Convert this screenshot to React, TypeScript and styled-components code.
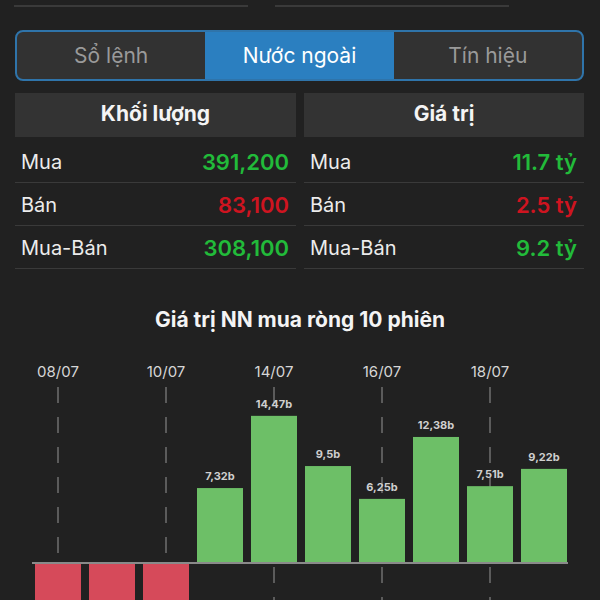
import React, { useState } from "react";
import styled, { createGlobalStyle } from "styled-components";

const GlobalStyle = createGlobalStyle`
  html, body {
    margin: 0;
    padding: 0;
    background: #212121;
  }
  body {
    font-family: Inter, "Noto Sans", "Liberation Sans", sans-serif;
    color: #f2f2f2;
  }
`;

type Tone = "up" | "down";

type Stat = {
  label: string;
  value: string;
  tone: Tone;
};

type Session = {
  date: string;
  value: number;
};

const TABS = ["Sổ lệnh", "Nước ngoài", "Tín hiệu"];

const VOLUME: Stat[] = [
  { label: "Mua", value: "391,200", tone: "up" },
  { label: "Bán", value: "83,100", tone: "down" },
  { label: "Mua-Bán", value: "308,100", tone: "up" },
];

const AMOUNT: Stat[] = [
  { label: "Mua", value: "11.7 tỷ", tone: "up" },
  { label: "Bán", value: "2.5 tỷ", tone: "down" },
  { label: "Mua-Bán", value: "9.2 tỷ", tone: "up" },
];

const SESSIONS: Session[] = [
  { date: "08/07", value: -4.6 },
  { date: "09/07", value: -5.1 },
  { date: "10/07", value: -4.3 },
  { date: "11/07", value: 7.32 },
  { date: "14/07", value: 14.47 },
  { date: "15/07", value: 9.5 },
  { date: "16/07", value: 6.25 },
  { date: "17/07", value: 12.38 },
  { date: "18/07", value: 7.51 },
  { date: "21/07", value: 9.22 },
];

const App = () => {
  const [tab, setTab] = useState(1);

  return (
    <>
      <GlobalStyle />
      <Page>
        <Content>
          <TopRow>
            <TopField />
            <TopField />
          </TopRow>
          <Segmented>
            {TABS.map((t, i) => (
              <Tab key={t} $active={i === tab} onClick={() => setTab(i)}>
                {t}
              </Tab>
            ))}
          </Segmented>
          <Panels>
            <StatPanel title="Khối lượng" stats={VOLUME} />
            <StatPanel title="Giá trị" stats={AMOUNT} />
          </Panels>
        </Content>
        <ChartSection>
          <ChartTitle>Giá trị NN mua ròng 10 phiên</ChartTitle>
          <NetChart sessions={SESSIONS} />
        </ChartSection>
      </Page>
    </>
  );
};

export default App;

const StatPanel = ({ title, stats }: { title: string; stats: Stat[] }) => (
  <Panel>
    <PanelHeader>{title}</PanelHeader>
    <Rows>
      {stats.map((s) => (
        <Row key={s.label}>
          <Label>{s.label}</Label>
          <Value $tone={s.tone}>{s.value}</Value>
        </Row>
      ))}
    </Rows>
  </Panel>
);

// chart geometry, px
const BASE_Y = 223;
const SCALE = 10.1;
const BAR_X = 35;
const PITCH = 54;
const BAR_W = 46;

const NetChart = ({ sessions }: { sessions: Session[] }) => (
  <svg width={600} height={260} viewBox="0 0 600 260">
    {sessions.map((s, i) =>
      i % 2 === 0 ? (
        <g key={"grid" + s.date}>
          <text
            x={BAR_X + i * PITCH + BAR_W / 2}
            y={37}
            textAnchor="middle"
            fontSize={15}
            fill="#d6d6d6"
            fontFamily="Inter, sans-serif"
          >
            {s.date}
          </text>
          <line
            x1={BAR_X + i * PITCH + BAR_W / 2}
            x2={BAR_X + i * PITCH + BAR_W / 2}
            y1={47}
            y2={260}
            stroke="#6f6f6f"
            strokeWidth={1.5}
            strokeDasharray="16 14"
          />
        </g>
      ) : null
    )}
    <line x1={32} x2={568} y1={BASE_Y} y2={BASE_Y} stroke="#8a8a8a" strokeWidth={2} />
    {sessions.map((s, i) => {
      const h = Math.abs(s.value) * SCALE;
      const x = BAR_X + i * PITCH;
      const up = s.value >= 0;
      return (
        <g key={s.date}>
          <rect
            x={x}
            y={up ? BASE_Y - 1 - h : BASE_Y + 1}
            width={BAR_W}
            height={h}
            fill={up ? "#6dbf67" : "#d64a5a"}
          />
          {up && (
            <text
              x={x + BAR_W / 2}
              y={BASE_Y - 1 - h - 8}
              textAnchor="middle"
              fontSize={11}
              fontWeight={700}
              fill="#cfcfcf"
              fontFamily="Inter, sans-serif"
            >
              {s.value.toString().replace(".", ",")}b
            </text>
          )}
        </g>
      );
    })}
  </svg>
);

const Page = styled.div`
  width: 600px;
  height: 600px;
  overflow: hidden;
  background: #212121;
`;

const Content = styled.div`
  padding: 0 16px 0 15px;
`;

const TopRow = styled.div`
  display: flex;
  gap: 27px;
  margin-left: -1px;
`;

const TopField = styled.div`
  width: 234px;
  height: 5px;
  border-bottom: 2px solid #3a3a3a;
`;

const Segmented = styled.div`
  display: flex;
  margin-top: 23px;
  height: 51px;
  box-sizing: border-box;
  border: 2px solid #2f74aa;
  border-radius: 8px;
  overflow: hidden;
  background: #323232;
`;

const Tab = styled.div<{ $active: boolean }>`
  flex: 1;
  display: flex;
  align-items: center;
  justify-content: center;
  font-size: 21px;
  color: ${(p) => (p.$active ? "#ffffff" : "#9a9a9a")};
  background: ${(p) => (p.$active ? "#2b7fc0" : "transparent")};
  cursor: pointer;
`;

const Panels = styled.div`
  display: grid;
  grid-template-columns: 281px 280px;
  gap: 8px;
  margin-top: 12px;
`;

const Panel = styled.div`
  display: flex;
  flex-direction: column;
`;

const PanelHeader = styled.div`
  height: 44px;
  box-sizing: border-box;
  padding-bottom: 3px;
  display: flex;
  align-items: center;
  justify-content: center;
  background: #333333;
  font-size: 21px;
  font-weight: 700;
  color: #f4f4f4;
`;

const Rows = styled.div`
  margin-top: 3px;
`;

const Row = styled.div`
  height: 43px;
  box-sizing: border-box;
  display: flex;
  align-items: center;
  justify-content: space-between;
  padding: 2px 7px 0 6px;
  border-bottom: 1px solid #3a3a3a;
`;

const Label = styled.span`
  font-size: 20px;
  color: #ececec;
`;

const Value = styled.span<{ $tone: Tone }>`
  font-size: 22px;
  font-weight: 600;
  color: ${(p) => (p.$tone === "up" ? "#22bb3a" : "#cf1420")};
`;

const ChartSection = styled.div`
  display: flex;
  flex-direction: column;
  align-items: center;
`;

const ChartTitle = styled.div`
  margin-top: 39px;
  height: 32px;
  line-height: 24px;
  font-size: 21px;
  font-weight: 700;
  color: #f4f4f4;
`;
